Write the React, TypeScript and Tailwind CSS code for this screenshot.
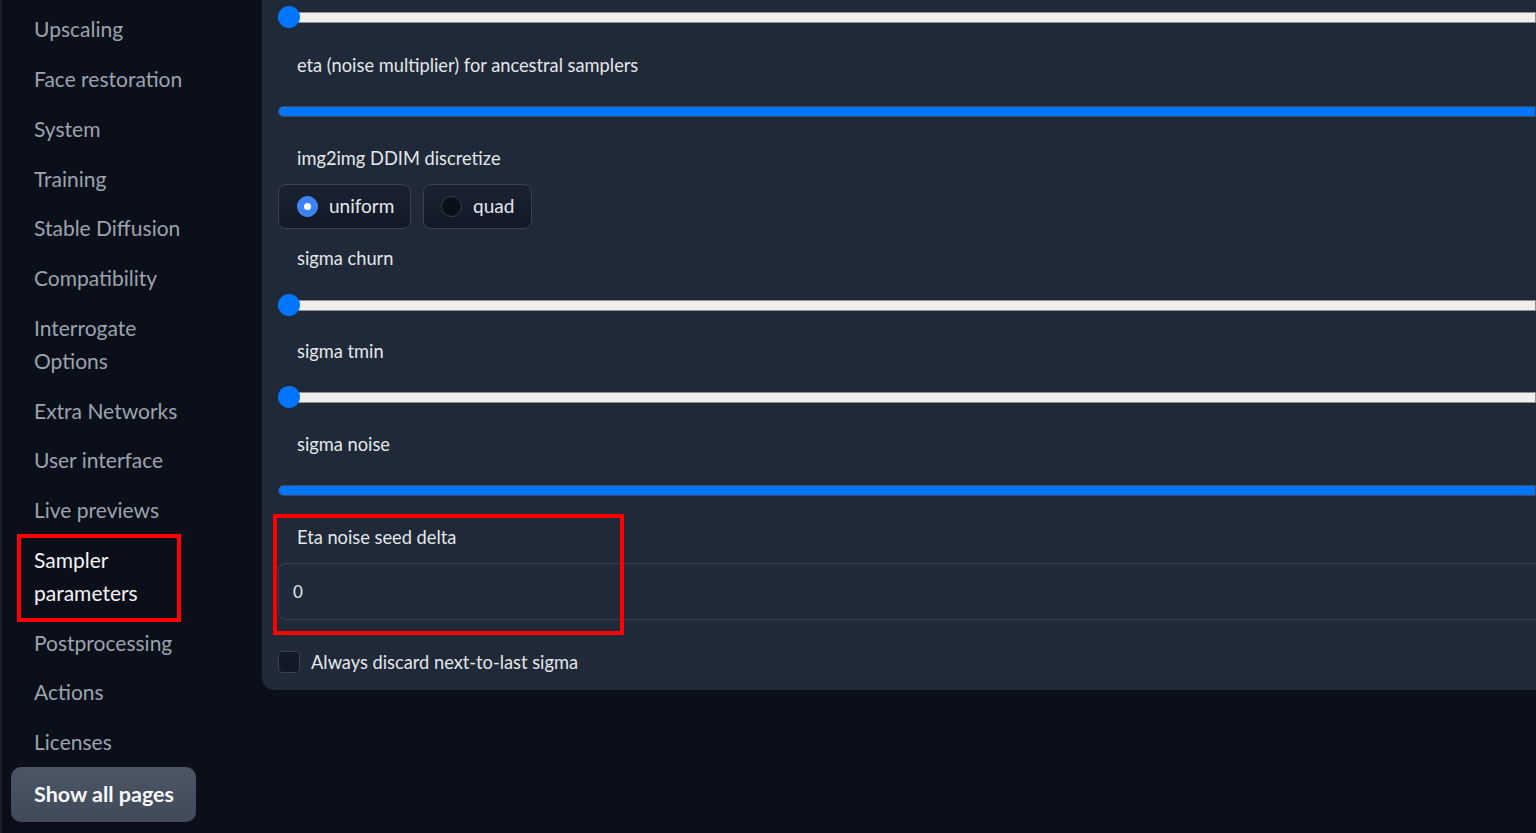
import React from 'react';

const font = { fontFamily: '"Source Sans Pro", Lato, "Noto Sans", sans-serif' };

const pages = [
  'Upscaling',
  'Face restoration',
  'System',
  'Training',
  'Stable Diffusion',
  'Compatibility',
  'Interrogate Options',
  'Extra Networks',
  'User interface',
  'Live previews',
  'Sampler parameters',
  'Postprocessing',
  'Actions',
  'Licenses',
];

const Slider: React.FC<{ full?: boolean }> = ({ full }) => {
  if (full) {
    return (
      <div className="h-[22px] flex items-center">
        <div className="w-full h-[11px] rounded-l-full bg-[#0075ff] border border-[#3b4a60]" />
      </div>
    );
  }
  return (
    <div className="relative h-[22px] flex items-center">
      <div className="w-full h-[11px] rounded-l-full bg-[#efefef] border border-[#8f8f8f]" />
      <div className="absolute left-0 top-0 w-[22px] h-[22px] rounded-full bg-[#0075ff]" />
    </div>
  );
};

const Label: React.FC<{ children: React.ReactNode; className?: string }> = ({ children, className }) => (
  <div className={`pl-[19px] text-[18.25px] leading-[24px] text-[#e5e7eb] ${className ?? ''}`}>{children}</div>
);

const App: React.FC = () => {
  return (
    <div className="h-[833px] w-[1536px] overflow-hidden bg-[#0b0f19] flex" style={font}>
      {/* Sidebar */}
      <div className="w-[262px] shrink-0 border-l-2 border-[#1a1f2b] pt-[4px]">
        <ul className="pl-[32px] pr-4">
          {pages.map((p) => {
            const active = p === 'Sampler parameters';
            return (
              <li
                key={p}
                className={`relative py-[8.375px] text-[21px] leading-[33px] ${
                  active ? 'text-[#f3f4f6]' : 'text-[#9ca3af]'
                } ${p === 'Interrogate Options' || active ? 'w-[120px]' : ''}`}
              >
                {p}
                {active && (
                  <div className="absolute -left-[17px] top-[-1px] w-[164px] h-[88px] border-4 border-[#ff0000]" />
                )}
              </li>
            );
          })}
        </ul>
        <div className="ml-[9px] w-[185px] h-[55px] rounded-[10px] bg-gradient-to-b from-[#4b5563] to-[#414a58] flex items-center pl-[23px] text-[21.5px] font-bold text-[#f9fafb]">
          Show all pages
        </div>
      </div>

      {/* Settings panel */}
      <div className="flex-1 self-start bg-[#1f2937] rounded-bl-[12px] pl-[16px] pt-[6px] pb-[17px]">
        <Slider />
        <Label className="mt-[25px]">eta (noise multiplier) for ancestral samplers</Label>
        <div className="mt-[23px]">
          <Slider full />
        </div>
        <Label className="mt-[24px]">img2img DDIM discretize</Label>
        <div className="mt-[14px] flex gap-[12px]">
          <div className="h-[45px] w-[133px] rounded-[8px] border border-[#374151] bg-gradient-to-b from-[#1b2331] to-[#111827] flex items-center pl-[18px] gap-[11px]">
            <div className="w-[21px] h-[21px] rounded-full bg-[#3b82f6] border border-[#4b8df7] flex items-center justify-center">
              <div className="w-[7px] h-[7px] rounded-full bg-white" />
            </div>
            <span className="text-[19px] text-[#e5e7eb]">uniform</span>
          </div>
          <div className="h-[45px] w-[109px] rounded-[8px] border border-[#374151] bg-gradient-to-b from-[#1b2331] to-[#111827] flex items-center pl-[17px] gap-[11px]">
            <div className="w-[21px] h-[21px] rounded-full bg-[#0b0f19] border border-[#374151]" />
            <span className="text-[19px] text-[#e5e7eb]">quad</span>
          </div>
        </div>
        <Label className="mt-[17px]">sigma churn</Label>
        <div className="mt-[24px]">
          <Slider />
        </div>
        <Label className="mt-[23px]">sigma tmin</Label>
        <div className="mt-[23px]">
          <Slider />
        </div>
        <Label className="mt-[24px]">sigma noise</Label>
        <div className="mt-[23px]">
          <Slider full />
        </div>
        <div className="relative">
          <Label className="mt-[24px]">Eta noise seed delta</Label>
          <div className="mt-[14px] h-[57px] rounded-l-[8px] border border-r-0 border-[#374151] bg-[#1f2937] flex items-center pl-[14px] text-[17px] text-[#e5e7eb]">
            0
          </div>
          <div className="absolute left-[-5px] top-[-11px] w-[351px] h-[121px] border-4 border-[#ff0000]" />
        </div>
        <div className="mt-[31px] flex items-center gap-[11px]">
          <div className="w-[22px] h-[22px] rounded-[4px] bg-[#111827] border border-[#374151]" />
          <span className="text-[18.25px] leading-[22px] text-[#e5e7eb]">Always discard next-to-last sigma</span>
        </div>
      </div>
    </div>
  );
};

export default App;
